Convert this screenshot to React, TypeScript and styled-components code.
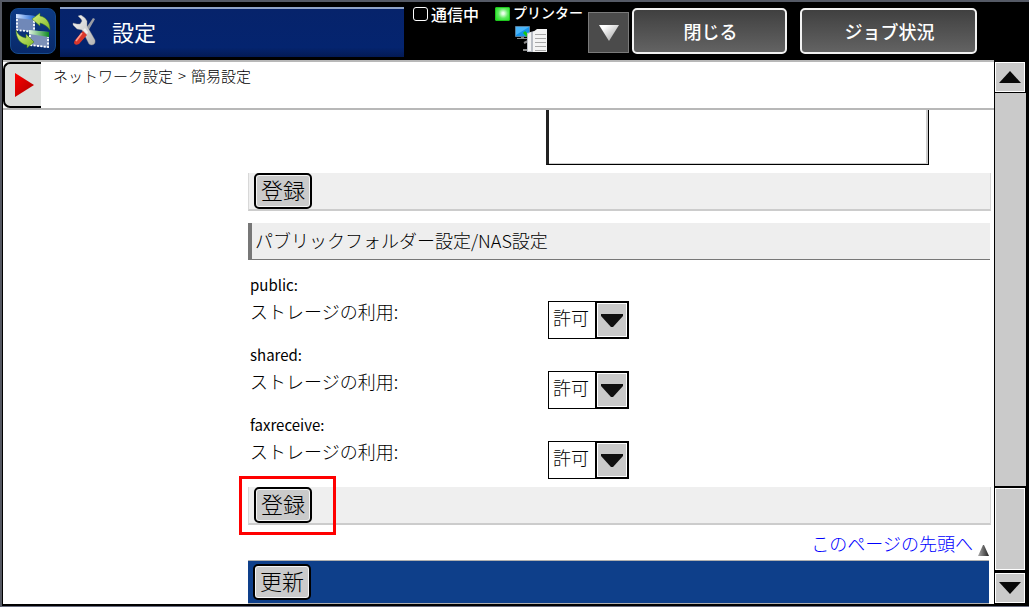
import React from 'react';
import styled, { createGlobalStyle, css } from 'styled-components';

const GlobalStyle = createGlobalStyle`
  *, *::before, *::after { box-sizing: border-box; }
  body {
    margin: 0;
    background: #000;
    font-family: "Noto Sans CJK JP", "Noto Sans", sans-serif;
    font-weight: 300;
    color: #000;
  }
  button, select, textarea { font: inherit; color: inherit; margin: 0; }
`;

const Screen = styled.div`
  display: flex;
  flex-direction: column;
  height: 100vh;
  background: #000;
  border-top: 2px solid #555a66;
  border-left: 2px solid #555862;
  border-bottom: 1px solid #6a6e80;
  overflow: hidden;
`;

const TopBar = styled.header`
  display: flex;
  align-items: flex-start;
  flex: none;
  height: 58px;
  padding: 5px 0 0 8px;
  color: #fff;
`;

const ModeButton = styled.button`
  display: flex;
  align-items: center;
  justify-content: center;
  width: 46px;
  height: 46px;
  margin: 1px 4px 0 0;
  padding: 0;
  border: 1px solid #164a8c;
  border-radius: 8px;
  background: linear-gradient(#0d3a85, #08296a);
`;

const TitleBox = styled.h1`
  display: flex;
  align-items: center;
  flex: 0 1 344px;
  gap: 12px;
  height: 50px;
  margin: 0;
  padding: 0 12px 4px;
  border-top: 2px solid #8fa3c8;
  background: linear-gradient(#06236b, #04246f 80%, #031a55);
  font-size: 22px;
  line-height: 32px;
  font-weight: 400;
`;

const StatusGroup = styled.div`
  display: flex;
  width: 184px;
  flex: none;
  padding-left: 9px;
  justify-content: space-between;
`;

const Status = styled.div<{ $small?: boolean }>`
  display: flex;
  flex-direction: column;
  width: ${(p) => (p.$small ? '93px' : '70px')};
  font-size: ${(p) => (p.$small ? '14px' : '16px')};
  line-height: ${(p) => (p.$small ? '10px' : '14px')};
  font-weight: 500;
  white-space: nowrap;
`;

const StatusLine = styled.div`
  display: flex;
  gap: 3px;
`;

const Lamp = styled.span<{ $on?: boolean }>`
  flex: none;
  width: 15px;
  height: 14px;
  border-radius: 3px;
  border: 1px solid #fff;
  ${(p) =>
    p.$on &&
    css`
      border: 1px solid #1fc81f;
      border-radius: 1px;
      background: radial-gradient(circle at 55% 45%, #e8ffe8 10%, #5fea5f 50%, #18e018);
    `}
`;

const StatusPicture = styled.div`
  display: flex;
  padding: 5px 0 0 20px;
`;

const DropButton = styled.button`
  display: flex;
  align-items: center;
  justify-content: center;
  flex: none;
  width: 41px;
  height: 41px;
  margin: 5px 3px 0 0;
  padding: 0;
  border: 1px solid #7a7a7a;
  background: #4b4b4b;
`;

const TopButton = styled.button<{ $wide?: boolean }>`
  flex: 0 0 auto;
  width: ${(p) => (p.$wide ? '177px' : '155px')};
  height: 46px;
  margin: 1px 13px 0 0;
  padding: 0 0 0 2px;
  border: 2px solid #f2f2f2;
  border-radius: 5px;
  background: linear-gradient(#404040, #636363);
  color: #fff;
  font-size: 18px;
  line-height: 24px;
  font-weight: 500;
`;

const Body = styled.div`
  display: flex;
  flex: 1;
  min-height: 0;
  padding: 0 3px 2px 1px;
`;

const Page = styled.div`
  display: flex;
  flex-direction: column;
  flex: 1;
  min-width: 0;
  background: #fff;
`;

const PathBar = styled.nav`
  display: flex;
  flex: none;
  height: 50px;
  border-top: 2px solid #b8b8b8;
  border-bottom: 2px solid #b8b8b8;
  font-size: 15px;
  line-height: 28px;
`;

const Path = styled.div`
  display: flex;
  gap: 5px;
`;

const PanelTab = styled.button`
  display: flex;
  align-items: center;
  width: 38px;
  height: 46px;
  margin-right: 12px;
  padding: 0 0 0 9px;
  border: 2px solid #000;
  border-right: 0;
  border-radius: 7px 0 0 7px;
  background: #dcdedc;
`;

const Content = styled.main`
  flex: 1;
  min-height: 0;
  overflow: hidden;
  padding: 0 3px 0 245px;
`;

const AddressArea = styled.textarea`
  display: block;
  width: 383px;
  height: 55px;
  margin: 0 0 8px 298px;
  border: 1px solid #000;
  border-top: 0;
  border-left: 3px solid #222;
  box-shadow: inset -2px -1px 0 #ccc;
  border-radius: 0;
  resize: none;
`;

const ActionBar = styled.div<{ $primary?: boolean }>`
  position: relative;
  display: flex;
  align-items: flex-start;
  height: 38px;
  padding-left: 5px;
  background: #efefef;
  border: 1px solid #d8d8d8;
  border-top: 0;
  border-bottom: 2px solid #ccc;
  ${(p) =>
    p.$primary &&
    css`
      height: 44px;
      margin-right: 2px;
      padding: 3px 0 0 5px;
      background: #0e3f8a;
      border: 0;
      border-top: 1px solid #b0b0b0;
      border-bottom: 1px solid #b0b0b0;
    `}
`;

const LastBar = styled(ActionBar)`
  margin-top: 5px;
`;

const ActionButton = styled.button`
  width: 58px;
  height: 36px;
  padding: 0 0 4px;
  border: 2px solid #000;
  border-radius: 5px;
  box-shadow: inset 0 0 0 1px #f4f4f4;
  background: #cacaca;
  font-size: 22px;
  line-height: 28px;
`;

const Highlight = styled.span`
  position: absolute;
  top: -11px;
  left: -10px;
  width: 97px;
  height: 59px;
  border: 3px solid #f00;
  pointer-events: none;
`;

const SectionTitle = styled.h2`
  height: 37px;
  margin: 12px 1px 12px 0;
  padding-left: 3px;
  border-left: 4px solid #777;
  border-bottom: 1px solid #777;
  background: #eee;
  font-size: 18px;
  line-height: 34px;
  font-weight: 300;
`;

const Folder = styled.section`
  height: 70px;
  padding-left: 2px;
`;

const FolderName = styled.h3`
  margin: 0;
  font-size: 15px;
  line-height: 26px;
  font-weight: 400;
`;

const Field = styled.div`
  display: grid;
  grid-template-columns: 298px auto;
  align-items: start;
  font-size: 18px;
  line-height: 26px;
`;

const SelectBox = styled.div`
  display: grid;
  width: 81px;
  height: 38px;
  margin-top: 3px;

  > * {
    grid-area: 1 / 1;
  }
`;

const Select = styled.select`
  appearance: none;
  width: 100%;
  height: 38px;
  padding: 0 34px 6px 4px;
  border: 1px solid #000;
  border-radius: 0;
  background: #fff;
  font-size: 18px;
  line-height: 26px;
`;

const SelectArrow = styled.span`
  display: flex;
  align-items: center;
  justify-content: center;
  justify-self: end;
  width: 34px;
  height: 38px;
  border: 2px solid #000;
  box-shadow: inset 0 0 0 1px #fff;
  background: #cacaca;
  pointer-events: none;
`;

const TopLinkRow = styled.div`
  display: flex;
  justify-content: flex-end;
  align-items: flex-end;
  gap: 5px;
  height: 35px;
  padding: 0 2px 4px 0;
  font-size: 18px;
  line-height: 26px;

  a {
    color: #00f;
    text-decoration: none;
  }
`;

const ScrollColumn = styled.div`
  display: flex;
  flex-direction: column;
  flex: none;
  width: 32px;
  padding: 2px 0 1px 1px;
`;

const ScrollButton = styled.button`
  display: flex;
  align-items: center;
  justify-content: center;
  flex: none;
  width: 30px;
  height: 30px;
  padding: 0;
  border: 1px solid #fff;
  background: #cacaca;
`;

const Track = styled.div`
  flex: 1;
  min-height: 0;
  margin: 1px 0 2px;
  background: #cacaca;
`;

const Thumb = styled.div`
  flex: none;
  width: 30px;
  height: 82px;
  margin-bottom: 3px;
  border: 1px solid #fff;
  background: #cacaca;
`;

const Triangle = ({ up }: { up?: boolean }) => (
  <svg width="22" height="12" viewBox="0 0 22 12" aria-hidden="true">
    <path d={up ? 'M0 12L11 0L22 12Z' : 'M0 0H22L11 12Z'} fill="#080808" />
  </svg>
);

const DropTriangle = () => (
  <svg width="22" height="13" viewBox="0 0 22 13" aria-hidden="true">
    <path d="M0 0H22V2L12 13H10L0 2Z" fill="#111" />
  </svg>
);

const SwapIcon = () => (
  <svg width="38" height="38" viewBox="0 0 38 38" aria-hidden="true">
    <defs>
      <linearGradient id="swapGreen" x1="0" y1="0" x2="1" y2="1">
        <stop offset="0" stopColor="#d8f080" />
        <stop offset="1" stopColor="#7fb82a" />
      </linearGradient>
      <linearGradient id="barBlue" x1="0" x2="1">
        <stop offset="0" stopColor="#d6e6ff" />
        <stop offset="1" stopColor="#1b66d8" />
      </linearGradient>
      <linearGradient id="barGreen" x1="0" x2="1">
        <stop offset="0" stopColor="#e2f5e2" />
        <stop offset="1" stopColor="#118a22" />
      </linearGradient>
    </defs>
    <path d="M2 2L21 4V20L2 18Z" fill="#7088b8" />
    <path d="M2 2L21 4V8L2 6Z" fill="url(#barBlue)" />
    <path d="M3 7V18L20 20V8" fill="none" stroke="#fff" strokeWidth="1.8" strokeDasharray="2 1.4" />
    <path d="M15 18L35 20V36L15 33Z" fill="#7c90b8" />
    <path d="M15 18L35 20V25L15 22Z" fill="url(#barGreen)" />
    <path d="M16 23V33L34 35V25" fill="none" stroke="#fff" strokeWidth="1.8" strokeDasharray="2 1.4" />
    <path d="M18 7L26 1V4C32 5 36 10 36 18C33 14 30 12 26 11V14Z" fill="url(#swapGreen)" stroke="#3d7a18" strokeWidth=".5" />
    <path d="M2 18C4 23 7 25 12 26V22L20 30L13 36V33C6 32 2 26 2 18Z" fill="url(#swapGreen)" stroke="#3d7a18" strokeWidth=".5" />
  </svg>
);

const ToolsIcon = () => (
  <svg width="28" height="32" viewBox="0 0 28 32" aria-hidden="true">
    <defs>
      <linearGradient id="steel" x1="0" x2="1" y2="1">
        <stop offset="0" stopColor="#f5f5f5" />
        <stop offset="1" stopColor="#b4b4b4" />
      </linearGradient>
    </defs>
    <path d="M21 3L23 4L15 18L12 16Z" fill="#9a9da4" />
    <path d="M6 1L9 0L13 3L15 6V11L23 25Q24 30 19 30L17 29L10 15L5 14L1 10V8L5 9L8 9L10 6L9 4Z" fill="url(#steel)" stroke="#888" strokeWidth=".4" />
    <path d="M11 16L15 20L7 29Q3 31 2 28Q2 26 4 24Z" fill="#d9362b" />
    <path d="M10 18L4 26" stroke="#ff9a8e" strokeWidth="1.5" />
    <path d="M11 15L13 13L16 17L15 19Z" fill="#eee" />
  </svg>
);

const PrinterIcon = () => (
  <svg width="33" height="27" viewBox="0 0 33 27" aria-hidden="true">
    <path d="M.5 .5H14.500V10.500H.5Z" fill="#1594ec" stroke="#5580a0" />
    <path d="M1 1H14L1 9Z" fill="#49b5fa" />
    <path d="M6 11H9V12H12V13H2V12H6Z" fill="#888" />
    <path d="M9 6L14 11" stroke="#18c818" strokeWidth="3" />
    <path d="M9 17L13 15M8 24H13" stroke="#888" strokeWidth="2" />
    <path d="M12 7L19 5V26H12Z" fill="#b9bdc4" />
    <path d="M13 8L16 6V25H13Z" fill="#f2f2f2" />
    <path d="M18 6L22 3H32V26H18Z" fill="#f4f4f4" />
    <path d="M20 8.500H31M20 12.500H31M20 16.500H31M20 20.500H31M20 24.500H31" stroke="#a8a8a8" />
  </svg>
);

const folders = ['public', 'shared', 'faxreceive'];

export default function App() {
  return (
    <>
      <GlobalStyle />
      <Screen>
        <TopBar>
          <ModeButton aria-label="切替">
            <SwapIcon />
          </ModeButton>
          <TitleBox>
            <ToolsIcon />
            設定
          </TitleBox>
          <StatusGroup>
            <Status>
              <StatusLine>
                <Lamp />
                通信中
              </StatusLine>
            </Status>
            <Status $small>
              <StatusLine>
                <Lamp $on />
                プリンター
              </StatusLine>
              <StatusPicture>
                <PrinterIcon />
              </StatusPicture>
            </Status>
          </StatusGroup>
          <DropButton aria-label="状態">
            <svg width="20" height="16" viewBox="0 0 20 16" aria-hidden="true">
              <defs>
                <linearGradient id="dropFill" x2="1" y2="1">
                  <stop offset=".2" stopColor="#fff" />
                  <stop offset="1" stopColor="#999" />
                </linearGradient>
              </defs>
              <path d="M0 0H20L10 16Z" fill="url(#dropFill)" />
            </svg>
          </DropButton>
          <TopButton>閉じる</TopButton>
          <TopButton $wide>ジョブ状況</TopButton>
        </TopBar>
        <Body>
          <Page>
            <PathBar>
              <PanelTab aria-label="メニュー">
                <svg width="20" height="24" viewBox="0 0 20 24" aria-hidden="true">
                  <defs>
                    <linearGradient id="playFill" x2="1" y2="1">
                      <stop offset="0" stopColor="#f00" />
                      <stop offset="1" stopColor="#a00" />
                    </linearGradient>
                  </defs>
                  <path d="M1 0L20 12L1 24Z" fill="url(#playFill)" />
                </svg>
              </PanelTab>
              <Path>
                <span>ネットワーク設定</span>
                <span>&gt;</span>
                <span>簡易設定</span>
              </Path>
            </PathBar>
            <Content>
              <AddressArea aria-label="入力" />
              <ActionBar>
                <ActionButton>登録</ActionButton>
              </ActionBar>
              <SectionTitle>パブリックフォルダー設定/NAS設定</SectionTitle>
              {folders.map((name) => (
                <Folder key={name}>
                  <FolderName>{name}:</FolderName>
                  <Field>
                    <label htmlFor={name}>ストレージの利用:</label>
                    <SelectBox>
                      <Select id={name} defaultValue="allow">
                        <option value="allow">許可</option>
                      </Select>
                      <SelectArrow>
                        <DropTriangle />
                      </SelectArrow>
                    </SelectBox>
                  </Field>
                </Folder>
              ))}
              <LastBar>
                <ActionButton>登録</ActionButton>
                <Highlight />
              </LastBar>
              <TopLinkRow>
                <a href="#top">このページの先頭へ</a>
                <svg width="11" height="11" viewBox="0 0 11 11" aria-hidden="true">
                  <defs>
                    <linearGradient id="topFill">
                      <stop offset="0" stopColor="#aaa" />
                      <stop offset="1" stopColor="#222" />
                    </linearGradient>
                  </defs>
                  <path d="M0 11L5 0H6L11 11Z" fill="url(#topFill)" />
                </svg>
              </TopLinkRow>
              <ActionBar $primary>
                <ActionButton>更新</ActionButton>
              </ActionBar>
            </Content>
          </Page>
          <ScrollColumn>
            <ScrollButton aria-label="上へ">
              <Triangle up />
            </ScrollButton>
            <Track />
            <Thumb />
            <ScrollButton aria-label="下へ">
              <Triangle />
            </ScrollButton>
          </ScrollColumn>
        </Body>
      </Screen>
    </>
  );
}
